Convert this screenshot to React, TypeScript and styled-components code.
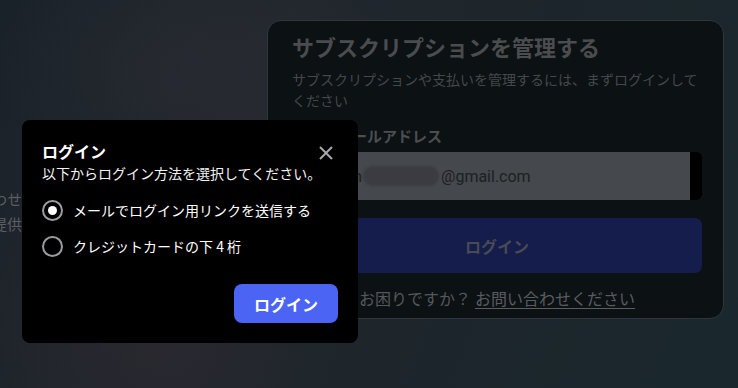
import React from "react";
import styled, { createGlobalStyle } from "styled-components";

const GlobalStyle = createGlobalStyle`
  html, body { margin: 0; padding: 0; }
  body {
    width: 738px;
    height: 388px;
    overflow: hidden;
    background: #1d242a;
    font-family: Roboto, "Noto Sans CJK JP", sans-serif;
  }
  * { box-sizing: border-box; }
`;

const Page = styled.div`
  position: relative;
  width: 738px;
  height: 388px;
  overflow: hidden;
  display: flex;
  align-items: flex-start;
  background:
    radial-gradient(ellipse 240px 260px at 150px 310px, rgba(48, 40, 48, 0.6), transparent 75%),
    radial-gradient(ellipse 260px 180px at 190px 70px, rgba(44, 44, 52, 0.55), transparent 75%),
    linear-gradient(110deg, #1a2229 0%, #22272e 35%, #1c252b 65%, #1a282d 100%);
`;

const SideColumn = styled.div`
  flex: 0 0 267px;
  padding-top: 188px;
  overflow: hidden;
`;

const SideText = styled.p`
  margin: 0 0 0 -68px;
  width: 90px;
  text-align: right;
  font-size: 15px;
  line-height: 25px;
  color: #5b5e63;
  white-space: nowrap;
`;

const Card = styled.section`
  flex: 0 0 457px;
  margin-top: 20px;
  display: flex;
  flex-direction: column;
  padding: 13px 21px 6px 24px;
  border: 1px solid #30363a;
  border-radius: 14px;
  background: #0c1114;
`;

const CardTitle = styled.h1`
  margin: 0;
  font-size: 22px;
  line-height: 30px;
  font-weight: 700;
  color: #4a4c4e;
`;

const CardDesc = styled.p`
  margin: 6px 0 0;
  font-size: 14px;
  line-height: 21px;
  color: #45484b;
`;

const FieldLabel = styled.label`
  margin-top: 14px;
  font-size: 15px;
  line-height: 22px;
  font-weight: 700;
  color: #4c4e50;
`;

const InputBox = styled.div`
  margin-top: 4px;
  height: 48px;
  display: flex;
  border-radius: 6px;
  overflow: hidden;
`;

const InputField = styled.div`
  flex: 1;
  display: flex;
  align-items: center;
  padding-left: 56px;
  background: #45484d;
  font-family: Roboto, sans-serif;
  font-size: 16px;
  color: #1d1f22;
`;

const InputEdge = styled.div`
  flex: 0 0 12px;
  background: #000;
`;

const Blurred = styled.span`
  display: inline-block;
  width: 76px;
  height: 20px;
  margin: 0 2px 0 1px;
  border-radius: 10px;
  background: #3a3c41;
  filter: blur(1.2px);
`;

const CardButton = styled.button`
  margin-top: 18px;
  height: 55px;
  border: none;
  border-radius: 7px;
  background: #141d4c;
  color: #4a4b52;
  font-family: "Noto Sans CJK JP", sans-serif;
  font-size: 16px;
  font-weight: 700;
`;

const HelpText = styled.p`
  margin: 15px 0 0;
  font-size: 16px;
  line-height: 24px;
  text-align: center;
  color: #55585b;
`;

const HelpLink = styled.a`
  color: #5a5c60;
  text-decoration: underline;
  text-underline-offset: 3px;
`;

const Modal = styled.div`
  position: absolute;
  left: 22px;
  top: 120px;
  width: 336px;
  padding: 20px;
  border-radius: 8px;
  background: #000;
  display: flex;
  flex-direction: column;
  font-family: "Noto Sans CJK JP", sans-serif;
`;

const ModalHeader = styled.div`
  display: flex;
  justify-content: space-between;
  align-items: flex-start;
`;

const ModalHeading = styled.div`
  flex: 1;
  min-width: 0;
`;

const ModalTitle = styled.h2`
  margin: 0;
  font-size: 16px;
  line-height: 22px;
  font-weight: 700;
  color: #fff;
`;

const ModalDesc = styled.p`
  margin: 0;
  font-size: 14px;
  line-height: 22px;
  color: #f2f2f2;
  white-space: nowrap;
`;

const CloseButton = styled.button`
  flex: 0 0 14px;
  margin: 6px 5px 0 0;
  padding: 0;
  border: none;
  background: none;
  width: 14px;
  height: 14px;
  display: flex;
`;

const Options = styled.div`
  margin-top: 13px;
  display: flex;
  flex-direction: column;
  gap: 10px;
`;

const OptionRow = styled.label`
  display: flex;
  align-items: center;
  gap: 10px;
  height: 26px;
  font-size: 14px;
  line-height: 26px;
  color: #fff;
`;

const RadioCircle = styled.span<{ $checked?: boolean }>`
  flex: 0 0 21px;
  width: 21px;
  height: 21px;
  border-radius: 50%;
  border: 2px solid #9c9ba2;
  display: flex;
  align-items: center;
  justify-content: center;
  &::after {
    content: "";
    width: 9px;
    height: 9px;
    border-radius: 50%;
    background: #fff;
    display: ${(p) => (p.$checked ? "block" : "none")};
  }
`;

const ModalFooter = styled.div`
  margin-top: 25px;
  display: flex;
  justify-content: flex-end;
`;

const PrimaryButton = styled.button`
  width: 104px;
  height: 39px;
  border: none;
  border-radius: 8px;
  background: #4b64f4;
  color: #fff;
  font-family: "Noto Sans CJK JP", sans-serif;
  font-size: 16px;
  font-weight: 700;
`;

export default function App() {
  return (
    <>
      <GlobalStyle />
      <Page>
        <SideColumn>
          <SideText>お問い合わせ</SideText>
          <SideText>情報を提供</SideText>
        </SideColumn>
        <Card>
          <CardTitle>サブスクリプションを管理する</CardTitle>
          <CardDesc>
            サブスクリプションや支払いを管理するには、まずログインしてください
          </CardDesc>
          <FieldLabel>ご登録メールアドレス</FieldLabel>
          <InputBox>
            <InputField>
              m<Blurred />@gmail.com
            </InputField>
            <InputEdge />
          </InputBox>
          <CardButton>ログイン</CardButton>
          <HelpText>
            お困りですか？ <HelpLink>お問い合わせください</HelpLink>
          </HelpText>
        </Card>
        <Modal>
          <ModalHeader>
            <ModalHeading>
              <ModalTitle>ログイン</ModalTitle>
              <ModalDesc>以下からログイン方法を選択してください。</ModalDesc>
            </ModalHeading>
            <CloseButton aria-label="閉じる">
              <svg width="14" height="14" viewBox="0 0 14 14">
                <path d="M1 1L13 13M13 1L1 13" stroke="#a8a8ad" strokeWidth="2" strokeLinecap="butt" />
              </svg>
            </CloseButton>
          </ModalHeader>
          <Options>
            <OptionRow>
              <RadioCircle $checked />
              メールでログイン用リンクを送信する
            </OptionRow>
            <OptionRow>
              <RadioCircle />
              クレジットカードの下 4 桁
            </OptionRow>
          </Options>
          <ModalFooter>
            <PrimaryButton>ログイン</PrimaryButton>
          </ModalFooter>
        </Modal>
      </Page>
    </>
  );
}
